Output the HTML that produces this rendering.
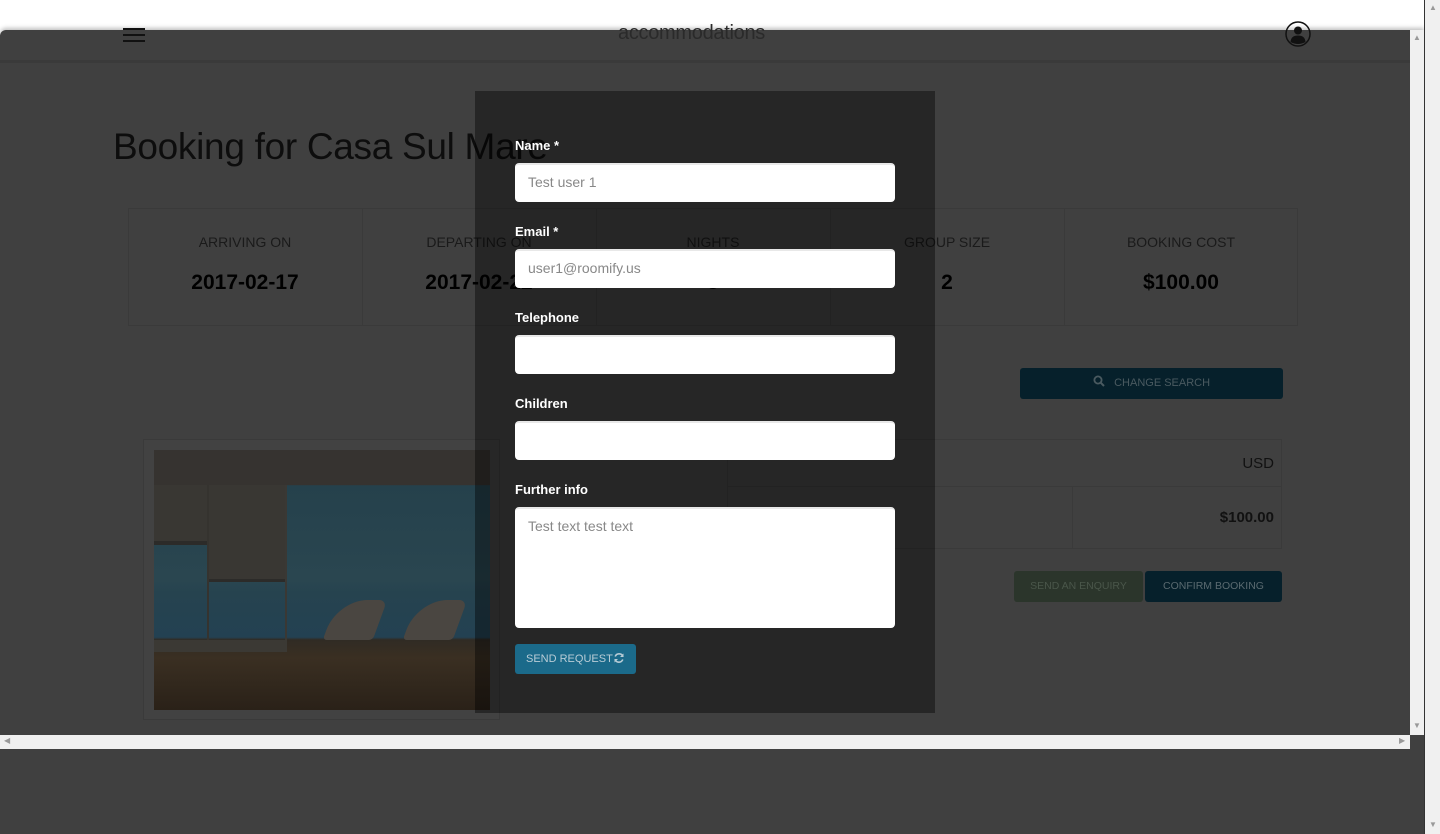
<!DOCTYPE html>
<html><head><meta charset="utf-8"><style>
*{box-sizing:border-box;margin:0;padding:0}
body{width:1440px;height:834px;overflow:hidden;background:#fff;font-family:"Liberation Sans",sans-serif;position:relative}
.a{position:absolute}
.frame{left:0;top:30px;width:1424px;height:804px;background:#404040;border-top-left-radius:6px;box-shadow:0 -2px 4px rgba(0,0,0,.25)}
.lbl{color:#1a1a1a;font-size:14px;text-align:center;width:234px}
.val{color:#000;font-size:21px;font-weight:bold;text-align:center;width:234px}
.ml{color:#fff;font-weight:bold;font-size:13px;left:515px}
.in{left:515px;width:380px;height:39px;background:#fff;border-radius:4px;border-top:2px solid #e8e8e8;color:#888;font-size:14px;padding:9px 13px}
</style></head><body>
<div class="a frame"></div>
<div class="a" style="left:0;top:60px;width:1410px;height:3px;background:#3a3a3a"></div>
<div class="a" style="left:123px;top:28px;width:22px;height:2px;background:#111"></div>
<div class="a" style="left:123px;top:34px;width:22px;height:2px;background:#111"></div>
<div class="a" style="left:123px;top:40px;width:22px;height:2px;background:#111"></div>
<div class="a" style="left:618px;top:22px;font-size:20px;color:#2a2a2a;letter-spacing:-0.3px">accommodations</div>
<svg class="a" style="left:1285px;top:21px" width="26" height="26" viewBox="0 0 26 26"><circle cx="13" cy="13" r="12" fill="none" stroke="#111" stroke-width="1.5"/><circle cx="13" cy="9.5" r="4" fill="#111"/><path d="M5.5 21 Q6 14.5 13 14.5 Q20 14.5 20.5 21 Q13 25 5.5 21Z" fill="#111"/></svg>
<div class="a" style="left:113px;top:126px;font-size:37px;color:#0d0d0d;letter-spacing:-0.3px">Booking for Casa Sul Mare</div>
<div class="a" style="left:128px;top:208px;width:1170px;height:118px;border:1px solid #3a3a3a"></div>
<div class="a" style="left:362px;top:208px;width:1px;height:118px;background:#3a3a3a"></div>
<div class="a" style="left:596px;top:208px;width:1px;height:118px;background:#3a3a3a"></div>
<div class="a" style="left:830px;top:208px;width:1px;height:118px;background:#3a3a3a"></div>
<div class="a" style="left:1064px;top:208px;width:1px;height:118px;background:#3a3a3a"></div>
<div class="a lbl" style="left:128px;top:234px">ARRIVING ON</div><div class="a val" style="left:128px;top:271px">2017-02-17</div>
<div class="a lbl" style="left:362px;top:234px">DEPARTING ON</div><div class="a val" style="left:362px;top:271px">2017-02-22</div>
<div class="a lbl" style="left:596px;top:234px">NIGHTS</div><div class="a val" style="left:596px;top:271px">5</div>
<div class="a lbl" style="left:830px;top:234px">GROUP SIZE</div><div class="a val" style="left:830px;top:271px">2</div>
<div class="a lbl" style="left:1064px;top:234px">BOOKING COST</div><div class="a val" style="left:1064px;top:271px">$100.00</div>
<div class="a" style="left:1020px;top:368px;width:263px;height:31px;background:#06202b;border-radius:3px;color:#4a5a60;font-size:11px;text-align:center;line-height:31px"><svg width="12" height="12" viewBox="0 0 12 12" style="vertical-align:-1px"><circle cx="5" cy="5" r="3.6" fill="none" stroke="#4a5a60" stroke-width="1.8"/><path d="M7.6 7.6 L11 11" stroke="#4a5a60" stroke-width="2"/></svg>&nbsp;&nbsp; CHANGE SEARCH</div>
<div class="a" style="left:727px;top:439px;width:555px;height:110px;border:1px solid #3a3a3a"></div>
<div class="a" style="left:727px;top:486px;width:555px;height:1px;background:#3a3a3a"></div>
<div class="a" style="left:1072px;top:486px;width:1px;height:63px;background:#3a3a3a"></div>
<div class="a" style="left:1200px;top:455px;width:74px;text-align:right;font-size:15px;color:#111">USD</div>
<div class="a" style="left:1150px;top:509px;width:124px;text-align:right;font-size:15px;font-weight:bold;color:#111">$100.00</div>
<div class="a" style="left:1014px;top:571px;width:129px;height:31px;background:#2b352b;border-radius:3px;color:#4a564a;font-size:10.5px;text-align:center;line-height:31px">SEND AN ENQUIRY</div>
<div class="a" style="left:1145px;top:571px;width:137px;height:31px;background:#06202b;border-radius:3px;color:#5a6a70;font-size:10.5px;text-align:center;line-height:31px">CONFIRM BOOKING</div>
<!-- image card -->
<div class="a" style="left:143px;top:439px;width:357px;height:281px;border:1px solid #3a3a3a;background:#424242"></div>
<div class="a" style="left:154px;top:450px;width:336px;height:260px;background:linear-gradient(#363330 0,#363330 13.5%,#25414c 13.6%,#2a4650 50%,#26434f 55%,#234152 72%,#302b24 73%,#3a2f22 80%,#2a2118 100%)"></div>
<div class="a" style="left:154px;top:485px;width:53px;height:60px;background:#393733;border-bottom:4px solid #2c2b29"></div>
<div class="a" style="left:207px;top:485px;width:2px;height:167px;background:#35332f"></div>
<div class="a" style="left:209px;top:485px;width:76px;height:97px;background:#393733;border-bottom:3px solid #2c2b29"></div>
<div class="a" style="left:285px;top:485px;width:2px;height:167px;background:#3a3834"></div>
<div class="a" style="left:154px;top:640px;width:133px;height:12px;background:#3b3934"></div>
<div class="a" style="left:330px;top:600px;width:50px;height:40px;background:#4a4641;border-radius:30px 8px 4px 4px;transform:skewX(-20deg)"></div>
<div class="a" style="left:410px;top:600px;width:50px;height:40px;background:#4a4641;border-radius:30px 8px 4px 4px;transform:skewX(-20deg)"></div>
<!-- modal -->
<div class="a" style="left:475px;top:91px;width:460px;height:622px;background:rgba(0,0,0,.4)"></div>
<div class="a ml" style="top:138px">Name *</div>
<div class="a in" style="top:163px">Test user 1</div>
<div class="a ml" style="top:224px">Email *</div>
<div class="a in" style="top:249px">user1@roomify.us</div>
<div class="a ml" style="top:310px">Telephone</div>
<div class="a in" style="top:335px"></div>
<div class="a ml" style="top:396px">Children</div>
<div class="a in" style="top:421px"></div>
<div class="a ml" style="top:482px">Further info</div>
<div class="a in" style="top:507px;height:121px">Test text test text</div>
<div class="a" style="left:515px;top:644px;width:121px;height:30px;background:#1b6a8a;border-radius:3px;color:#b8ccd6;font-size:11px;line-height:30px;padding-left:11px">SEND REQUEST<svg width="12" height="12" viewBox="0 0 12 12" style="vertical-align:-2px"><path d="M10 4.5 A4.2 4.2 0 0 0 2.2 4.5 M2 7.5 A4.2 4.2 0 0 0 9.8 7.5" fill="none" stroke="#b8ccd6" stroke-width="1.6"/><path d="M10.5 1.5 V5 H7" fill="#b8ccd6"/><path d="M1.5 10.5 V7 H5" fill="#b8ccd6"/></svg></div>
<div class="a" style="left:1410px;top:30px;width:14px;height:705px;background:#f0f0f0"></div>
<div class="a" style="left:0;top:735px;width:1410px;height:14px;background:#f0f0f0"></div>
<div class="a" style="left:1424px;top:0;width:16px;height:834px;background:#f0f0f0;border-left:1px solid #333"></div>
<div class="a" style="left:1429px;top:3px;color:#999;font-size:8px">&#9650;</div>
<div class="a" style="left:1429px;top:820px;color:#999;font-size:8px">&#9660;</div>
<div class="a" style="left:1413px;top:33px;color:#999;font-size:8px">&#9650;</div>
<div class="a" style="left:1413px;top:721px;color:#999;font-size:8px">&#9660;</div>
<div class="a" style="left:4px;top:736px;color:#999;font-size:8px">&#9664;</div>
<div class="a" style="left:1399px;top:736px;color:#999;font-size:8px">&#9654;</div>
</body></html>
